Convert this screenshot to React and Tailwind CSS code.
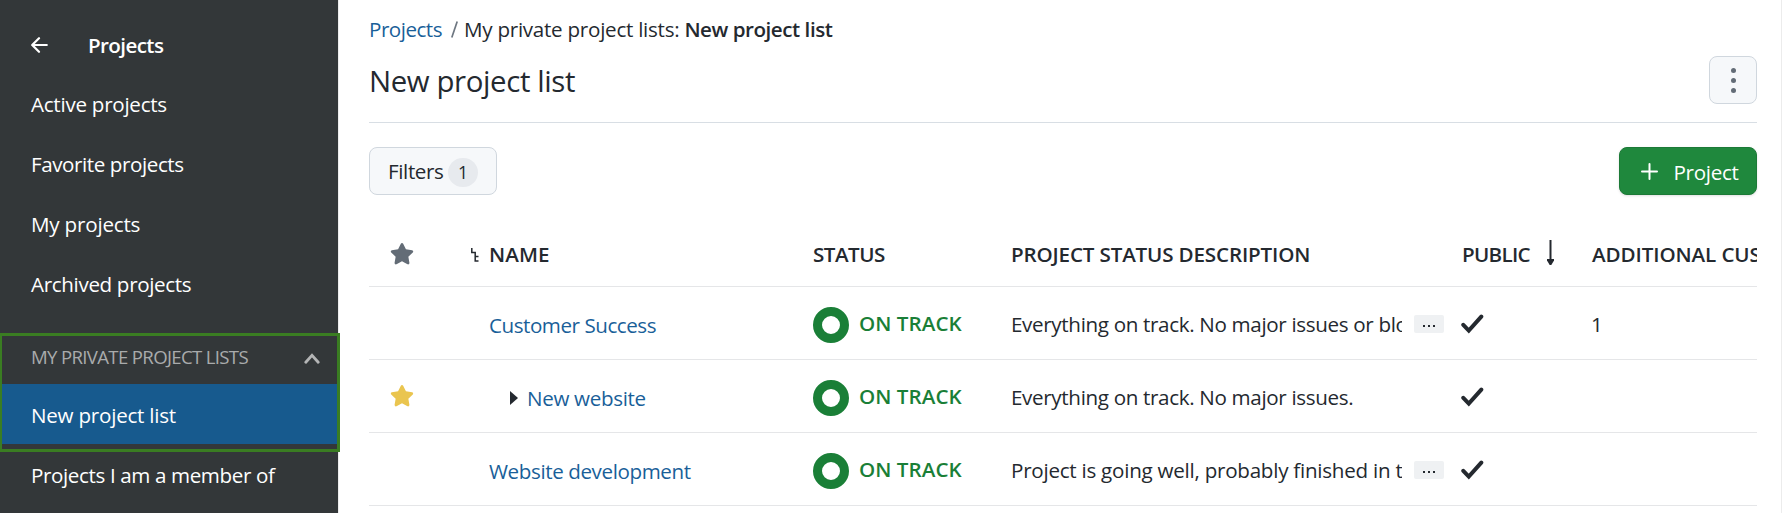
import React from 'react';

const star =
  'M12 0.9c.5 0 .95.28 1.17.73l2.75 5.6 6.15.9c1.1.16 1.5 1.5.73 2.25l-4.45 4.35 1.05 6.13c.18 1.08-.94 1.88-1.9 1.38L12 19.35l-5.5 2.89c-.96.5-2.08-.3-1.9-1.38l1.05-6.13L1.2 10.38c-.77-.75-.37-2.09.73-2.25l6.15-.9 2.75-5.6c.22-.45.67-.73 1.17-.73z';

function Star({ className }) {
  return (
    <svg viewBox="0 0 24 24" className={`h-6 w-6 ${className}`} fill="currentColor">
      <path d={star} />
    </svg>
  );
}

function NavItem({ label, tracking, active }) {
  return (
    <a className={`flex h-[60px] shrink-0 items-center pt-[2px] pl-[31px] ${active ? 'bg-[#175a8e]' : ''}`}>
      <span className={`whitespace-nowrap ${tracking}`}>{label}</span>
    </a>
  );
}

function Sidebar() {
  return (
    <aside className="relative flex w-[339px] shrink-0 flex-col border-r border-[#ececec] bg-[#333739] pt-[13px] text-white">
      <div className="flex h-[60px] shrink-0 items-center pt-[4px] pl-[31px]">
        <svg className="h-4 w-[17px]" viewBox="0 0 17 16" fill="none" stroke="white" strokeWidth="2.2" strokeLinecap="round" strokeLinejoin="round">
          <path d="M8 1.2 1.2 8 8 14.8M1.4 8h14.4" />
        </svg>
        <span className="ml-10 font-semibold tracking-[-0.6px]">Projects</span>
      </div>
      <NavItem label="Active projects" tracking="tracking-[-0.26px]" />
      <NavItem label="Favorite projects" tracking="tracking-[-0.42px]" />
      <NavItem label="My projects" tracking="tracking-[-0.2px]" />
      <NavItem label="Archived projects" tracking="tracking-[-0.34px]" />
      <div className="flex h-[71px] shrink-0 items-center justify-between pt-[17px] pr-[18px] pl-[31px] text-[18.6px] text-[#a9abac]">
        <span className="tracking-[-0.66px] whitespace-nowrap">MY PRIVATE PROJECT LISTS</span>
        <svg className="mt-[3px] h-[11px] w-4" viewBox="0 0 16 11" fill="none" stroke="#b4b5b6" strokeWidth="2.8" strokeLinecap="round">
          <path d="M1.8 9.2 8 2.4l6.2 6.8" />
        </svg>
      </div>
      <NavItem label="New project list" tracking="tracking-[-0.23px]" active />
      <NavItem label="Projects I am a member of" tracking="tracking-[-0.38px]" />
      <div className="pointer-events-none absolute top-[333px] left-0 h-[119px] w-[340px] border-[3px] border-l-2 border-[#3a7d22]" />
    </aside>
  );
}

const grid = 'grid grid-cols-[120px_324px_198px_451px_129px_400px] border-b border-[#e5e6e8]';

const rows = [
  { name: 'Customer Success', tracking: 'tracking-[-0.46px]', text: 'Everything on track. No major issues or blockers', more: true, custom: '1' },
  { name: 'New website', tracking: 'tracking-[-0.33px]', fav: true, child: true, text: 'Everything on track. No major issues.' },
  { name: 'Website development', tracking: 'tracking-[-0.4px]', text: 'Project is going well, probably finished in time', more: true, last: true },
];

function HeaderRow() {
  return (
    <div className={`${grid} mt-[27px] h-[65px] font-semibold`}>
      <div className="flex items-center pl-[21px]">
        <Star className="text-[#636c76]" />
        <svg className="mt-px ml-[57px] h-[14px] w-2" viewBox="0 0 8 14" fill="none" stroke="#24292f" strokeWidth="1.5">
          <path d="M.8 0v4.5h3.4V13H7.5M4.2 8.5H7.5" />
        </svg>
      </div>
      <div className="flex items-center tracking-[0.1px]">NAME</div>
      <div className="flex items-center tracking-[-0.49px]">STATUS</div>
      <div className="flex items-center tracking-[-0.155px]">PROJECT STATUS DESCRIPTION</div>
      <div className="flex items-center">
        <span className="tracking-[-0.69px]">PUBLIC</span>
        <svg className="-mt-[3px] ml-[17px] h-[25px] w-[7px]" viewBox="0 0 7 25">
          <path d="M3.5 0v20" stroke="#24292f" strokeWidth="2" />
          <path d="M0 19h7v1.6L4.3 25H2.7L0 20.600z" fill="#24292f" />
        </svg>
      </div>
      <div className="flex items-center pl-px tracking-[-0.1px] whitespace-nowrap">ADDITIONAL CUSTOM FIELD</div>
    </div>
  );
}

function Row({ row }) {
  return (
    <div className={`${grid} h-[73px]`}>
      <div className="flex items-center pl-[21px]">{row.fav && <Star className="text-[#eac54f]" />}</div>
      <div className="flex items-center pt-[3px] text-[#1a5f99]">
        {row.child && (
          <svg className="mr-[9px] ml-[21px] h-[14px] w-2" viewBox="0 0 8 14">
            <path d="M0 0l8 7-8 7z" fill="#24292f" />
          </svg>
        )}
        <span className={row.tracking}>{row.name}</span>
      </div>
      <div className="flex items-center font-semibold text-[#1a7f37]">
        <span className="mt-[4px] h-9 w-9 rounded-full border-[9px] border-[#1a7f37]" />
        <span className="ml-[10px] tracking-[0.05px]">ON TRACK</span>
      </div>
      <div className="flex items-center pt-[2px]">
        <span className={`w-[391px] overflow-hidden whitespace-nowrap ${row.last ? 'tracking-[-0.25px]' : 'tracking-[-0.335px]'}`}>{row.text}</span>
        {row.more && (
          <span className="ml-[12px] flex h-[18px] w-[30px] items-center justify-center gap-[3px] rounded-[2px] bg-[#eff1f3] pt-[4px]">
            <i className="h-[2px] w-[2px] bg-[#24292f]" />
            <i className="h-[2px] w-[2px] bg-[#24292f]" />
            <i className="h-[2px] w-[2px] bg-[#24292f]" />
          </span>
        )}
      </div>
      <div className="flex items-center">
        <svg className="mt-[2px] -ml-[1px] h-[20px] w-[23px]" viewBox="0 0 23 20" fill="none" stroke="#24292f" strokeWidth="4" strokeLinecap="round">
          <path d="M2.3 10.8 7.8 16.600 20.3 2.6" />
        </svg>
      </div>
      <div className="flex items-center pt-[2px]">{row.custom}</div>
    </div>
  );
}

export default function App() {
  return (
    <div className="flex h-[513px] w-[1782px] overflow-hidden bg-white font-['Open_Sans','Segoe_UI',sans-serif] text-[20.6px] leading-[28px] text-[#24292f]">
      <Sidebar />
      <main className="flex w-[1443px] flex-col border-r border-[#ececec] pr-6 pl-[30px]">
        <nav className="mt-[15px] flex h-[28px] whitespace-nowrap">
          <span className="tracking-[-0.5px] text-[#1a5f99]">Projects</span>
          <svg className="mt-[6px] ml-[9px] h-[17px] w-[7px]" viewBox="0 0 7 17" stroke="#6e7781" strokeWidth="1.7">
            <path d="M6.2 0.5.8 16.5" />
          </svg>
          <span className="ml-[6px] tracking-[-0.26px]">My private project lists:</span>
          <span className="ml-[5px] font-semibold tracking-[-0.46px]">New project list</span>
        </nav>
        <header className="mt-[13px] flex h-[48px] items-center justify-between">
          <h1 className="pt-[2px] text-[29.4px] leading-[40px] tracking-[-0.38px]">New project list</h1>
          <button className="flex h-12 w-12 flex-col items-center justify-center gap-[5px] rounded-[8px] border border-[#d0d7de] bg-[#f6f8fa]">
            <i className="h-[5px] w-[5px] rounded-full bg-[#636c76]" />
            <i className="h-[5px] w-[5px] rounded-full bg-[#636c76]" />
            <i className="h-[5px] w-[5px] rounded-full bg-[#636c76]" />
          </button>
        </header>
        <div className="mt-[18px] h-px shrink-0 bg-[#d8dee4]" />
        <div className="mt-6 flex h-12 shrink-0 justify-between">
          <button className="flex w-32 items-center rounded-[8px] border border-[#d0d7de] bg-[#f6f8fa] pl-[18px]">
            <span className="tracking-[-0.38px]">Filters</span>
            <span className="mt-[2px] ml-[4.5px] flex h-[29px] w-[30px] items-center justify-center rounded-full bg-[#e7eaee] text-[17.6px]">1</span>
          </button>
          <button className="flex w-[138px] items-center rounded-[8px] border border-[#1c7a37] bg-[#1f883d] pl-[21px] text-white shadow-sm">
            <svg className="h-[17px] w-[17px]" viewBox="0 0 17 17" stroke="white" strokeWidth="2" strokeLinecap="round">
              <path d="M8.5 1v15M1 8.5h15" />
            </svg>
            <span className="mt-[2px] ml-[15.5px] tracking-[-0.3px]">Project</span>
          </button>
        </div>
        <div className="overflow-hidden">
          <HeaderRow />
          {rows.map((row) => (
            <Row key={row.name} row={row} />
          ))}
        </div>
      </main>
    </div>
  );
}
